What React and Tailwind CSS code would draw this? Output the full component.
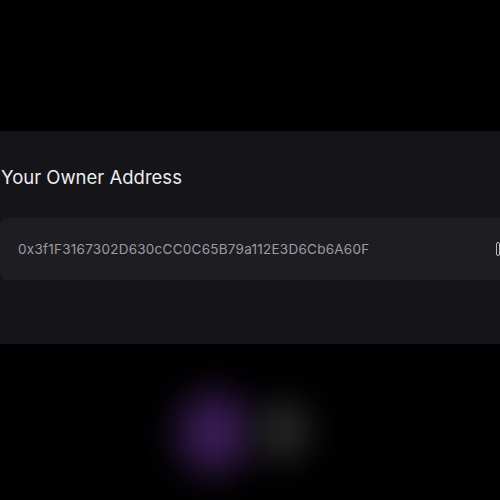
import React from 'react';

export default function App() {
  return (
    <div className="relative w-[500px] h-[500px] overflow-hidden bg-black font-['Inter','Liberation_Sans',sans-serif]">
      <div className="h-[131px]" />

      {/* Owner address panel */}
      <div className="h-[213px] bg-[#151419] pt-[33px]">
        <h2 className="pl-[1px] text-[18.5px] leading-[26px] text-[#ececef]">Your Owner Address</h2>
        <div className="mt-[28px] flex items-center h-[62px] w-[520px] rounded-l-lg bg-[#1e1d22] pl-[18px]">
          <span className="text-[13.5px] text-[#9d9ca3] tracking-[0.25px]">0x3f1F3167302D630cCC0C65B79a112E3D6Cb6A60F</span>
          <span className="ml-auto mr-[20px] w-[4px] h-[14px] rounded-sm border border-[#b8b8bc]" />
        </div>
      </div>

      {/* blurred orbs */}
      <div className="absolute left-[178px] top-[393px] w-[74px] h-[80px] rounded-full bg-[#3a1c55] blur-[18px]" />
      <div className="absolute left-[255px] top-[400px] w-[56px] h-[62px] rounded-full bg-[#242426] blur-[16px]" />
    </div>
  );
}
